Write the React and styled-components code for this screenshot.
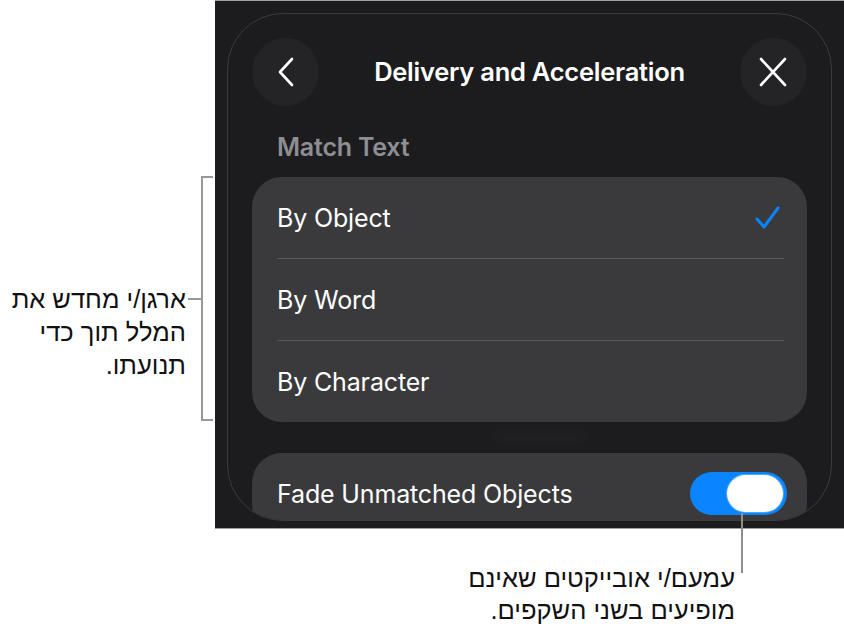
import React from "react";
import styled, { createGlobalStyle } from "styled-components";

const Global = createGlobalStyle`
  html, body { margin: 0; padding: 0; background: #ffffff; }
  body { width: 844px; height: 627px; overflow: hidden; }
  * { box-sizing: border-box; }
`;

const Page = styled.div`
  display: flex;
  flex-direction: column;
  width: 844px;
  height: 627px;
`;

const TopRow = styled.div`
  display: flex;
  height: 529px;
`;

const LeftCallout = styled.div`
  width: 215px;
  padding: 176px 2px 0 0;
  display: flex;
  justify-content: flex-end;
  align-items: flex-start;
`;

const CalloutText = styled.div`
  direction: rtl;
  text-align: right;
  font-family: "Liberation Sans", "DejaVu Sans", Arial, sans-serif;
  font-size: 25.5px;
  line-height: ${(p) => p.$lh || 33}px;
  color: #111;
  margin-top: ${(p) => p.$top || 0}px;
  padding-top: ${(p) => p.$pad || 0}px;
  white-space: nowrap;
`;

const Tick = styled.div`
  width: 13px;
  height: 2px;
  margin: 122px 0 0 2px;
  background: #979797;
`;

const Bracket = styled.div`
  width: 12px;
  height: 245px;
  border: 2px solid #979797;
  border-right: none;
`;

const Screen = styled.div`
  width: 629px;
  height: 529px;
  background: #1c1c1e;
  border-top: 1px solid #a0a0a0;
  border-bottom: 1px solid #a0a0a0;
  padding: 12px 12px 0 12px;
  overflow: hidden;
`;

const Panel = styled.div`
  height: 508px;
  border: 1px solid #3c3c3f;
  border-radius: 56px;
  overflow: hidden;
  background: #1c1c1e;
  padding: 24px 24px 0 24px;
  display: flex;
  flex-direction: column;
  font-family: Inter, "Open Sans", sans-serif;
`;

const Header = styled.div`
  display: flex;
  align-items: center;
  justify-content: space-between;
  height: 68px;
`;

const RoundButton = styled.div`
  width: 67px;
  height: 68px;
  border-radius: 50%;
  background: #242426;
  display: flex;
  align-items: center;
  justify-content: center;
`;

const Title = styled.div`
  color: #fff;
  font-size: 25.5px;
  font-weight: 600;
  letter-spacing: -0.25px;
  margin-bottom: 2px;
`;

const SectionLabel = styled.div`
  color: #8e8e93;
  font-size: 25px;
  font-weight: 600;
  line-height: 26px;
  margin: 28px 0 17px 25px;
  letter-spacing: -0.2px;
`;

const Card = styled.div`
  background: #3a3a3c;
  border-radius: 30px;
  flex-shrink: 0;
`;

const Row = styled.div`
  height: 81px;
  display: flex;
  align-items: center;
  justify-content: space-between;
  padding: 0 ${(p) => p.$right || 26}px 0 25px;
  color: #fff;
  font-size: 25px;
  letter-spacing: -0.15px;
`;

const Separator = styled.div`
  height: 1px;
  margin: 0 23px 0 25px;
  background: #58585c;
`;

const Gap = styled.div`
  height: 31px;
  display: flex;
  justify-content: center;
  align-items: center;
  flex-shrink: 0;
`;

const Glow = styled.div`
  width: 100px;
  height: 12px;
  margin-left: 20px;
  border-radius: 10px;
  background: rgba(255, 255, 255, 0.025);
  filter: blur(7px);
`;

const Toggle = styled.div`
  width: 97px;
  height: 43px;
  border-radius: 22px;
  background: #0a84ff;
  display: flex;
  align-items: center;
  justify-content: flex-end;
  padding-right: 4px;
`;

const Knob = styled.div`
  width: 56px;
  height: 37px;
  border-radius: 19px;
  background: #fff;
  box-shadow: 0 0 0 1px rgba(120, 190, 255, 0.6);
`;

const BottomCallout = styled.div`
  width: 743px;
  display: flex;
  justify-content: flex-end;
  align-items: flex-start;
`;

const Leader = styled.div`
  position: relative;
  z-index: 2;
  width: 2px;
  height: 60px;
  margin: -16px 0 0 6px;
  background: #8f8f8f;
`;

const ChevronLeft = () => (
  <svg width="20" height="30" viewBox="0 0 20 30">
    <path d="M16 2 L4 15 L16 28" fill="none" stroke="#fff" strokeWidth="2.6" strokeLinecap="round" strokeLinejoin="round" />
  </svg>
);

const CloseIcon = () => (
  <svg width="30" height="30" viewBox="0 0 30 30">
    <path d="M3 2 L27 28 M27 2 L3 28" fill="none" stroke="#fff" strokeWidth="2.6" strokeLinecap="round" />
  </svg>
);

const Check = () => (
  <svg width="26" height="24" viewBox="0 0 26 24">
    <path d="M2 13 L9 21 L23 2" fill="none" stroke="#0a84ff" strokeWidth="3" strokeLinecap="round" strokeLinejoin="round" />
  </svg>
);

export default function App() {
  return (
    <Page>
      <Global />
      <TopRow>
        <LeftCallout>
          <CalloutText $top={107}>
            ארגן/י מחדש את
            <br />
            המלל תוך כדי
            <br />
            תנועתו.
          </CalloutText>
          <Tick />
          <Bracket />
        </LeftCallout>
        <Screen>
          <Panel>
            <Header>
              <RoundButton>
                <ChevronLeft />
              </RoundButton>
              <Title>Delivery and Acceleration</Title>
              <RoundButton>
                <CloseIcon />
              </RoundButton>
            </Header>
            <SectionLabel>Match Text</SectionLabel>
            <Card>
              <Row $right={26}>
                <span>By Object</span>
                <Check />
              </Row>
              <Separator />
              <Row>
                <span>By Word</span>
              </Row>
              <Separator />
              <Row>
                <span>By Character</span>
              </Row>
            </Card>
            <Gap>
              <Glow />
            </Gap>
            <Card>
              <Row $right={20}>
                <span>Fade Unmatched Objects</span>
                <Toggle>
                  <Knob />
                </Toggle>
              </Row>
            </Card>
          </Panel>
        </Screen>
      </TopRow>
      <BottomCallout>
        <CalloutText $pad={33} $lh={32}>
          עמעם/י אובייקטים שאינם
          <br />
          מופיעים בשני השקפים.
        </CalloutText>
        <Leader />
      </BottomCallout>
    </Page>
  );
}
